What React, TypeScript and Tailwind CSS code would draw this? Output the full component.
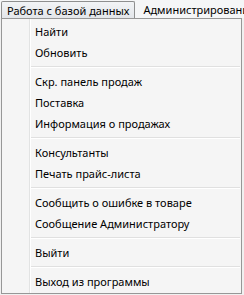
const groups: string[][] = [
  ["Найти", "Обновить"],
  ["Скр. панель продаж", "Поставка", "Информация о продажах"],
  ["Консультанты", "Печать прайс-листа"],
  ["Сообщить о ошибке в товаре", "Сообщение Администратору"],
  ["Выйти"],
  ["Выход из программы"],
];

export default function App() {
  return (
    <div
      className="relative h-[295px] w-[244px] overflow-hidden bg-[#f0f0f0] text-[11px] text-black"
      style={{ fontFamily: '"Noto Sans", "Open Sans", sans-serif' }}
    >
      {/* MENU BAR */}
      <div className="flex h-[18px] items-stretch whitespace-nowrap bg-[#f5f6f7] pt-px">
        <div className="ml-px flex h-[17px] items-center rounded-t-[2px] border border-b-0 border-[#8e8f8f] bg-gradient-to-b from-[#f2f4f6] to-[#e3e6ea] px-[5px] leading-none">
          Работа с базой данных
        </div>
        <div className="flex items-center pl-[8px] leading-none">Администрирование</div>
      </div>

      {/* DROPDOWN */}
      <div className="relative ml-px mr-[2px] flex flex-col border border-[#979797] bg-[#f5f5f5] pt-[2px] pb-px">
        <div className="absolute bottom-0 left-[27px] top-0 w-px bg-[#e2e3e3]" />
        <div className="absolute bottom-0 left-[28px] top-0 w-px bg-white" />
        {groups.map((items, gi) => (
          <div key={gi}>
            {gi > 0 && (
              <div className="flex h-[8px] flex-col justify-center pl-[29px] pr-px">
                <div className="h-px bg-[#e0e0e0]" />
                <div className="h-px bg-white" />
              </div>
            )}
            {items.map((label) => (
              <div
                key={label}
                className="flex h-[21px] items-center whitespace-nowrap pl-[33px] leading-none"
              >
                {label}
              </div>
            ))}
          </div>
        ))}
      </div>
    </div>
  );
}
